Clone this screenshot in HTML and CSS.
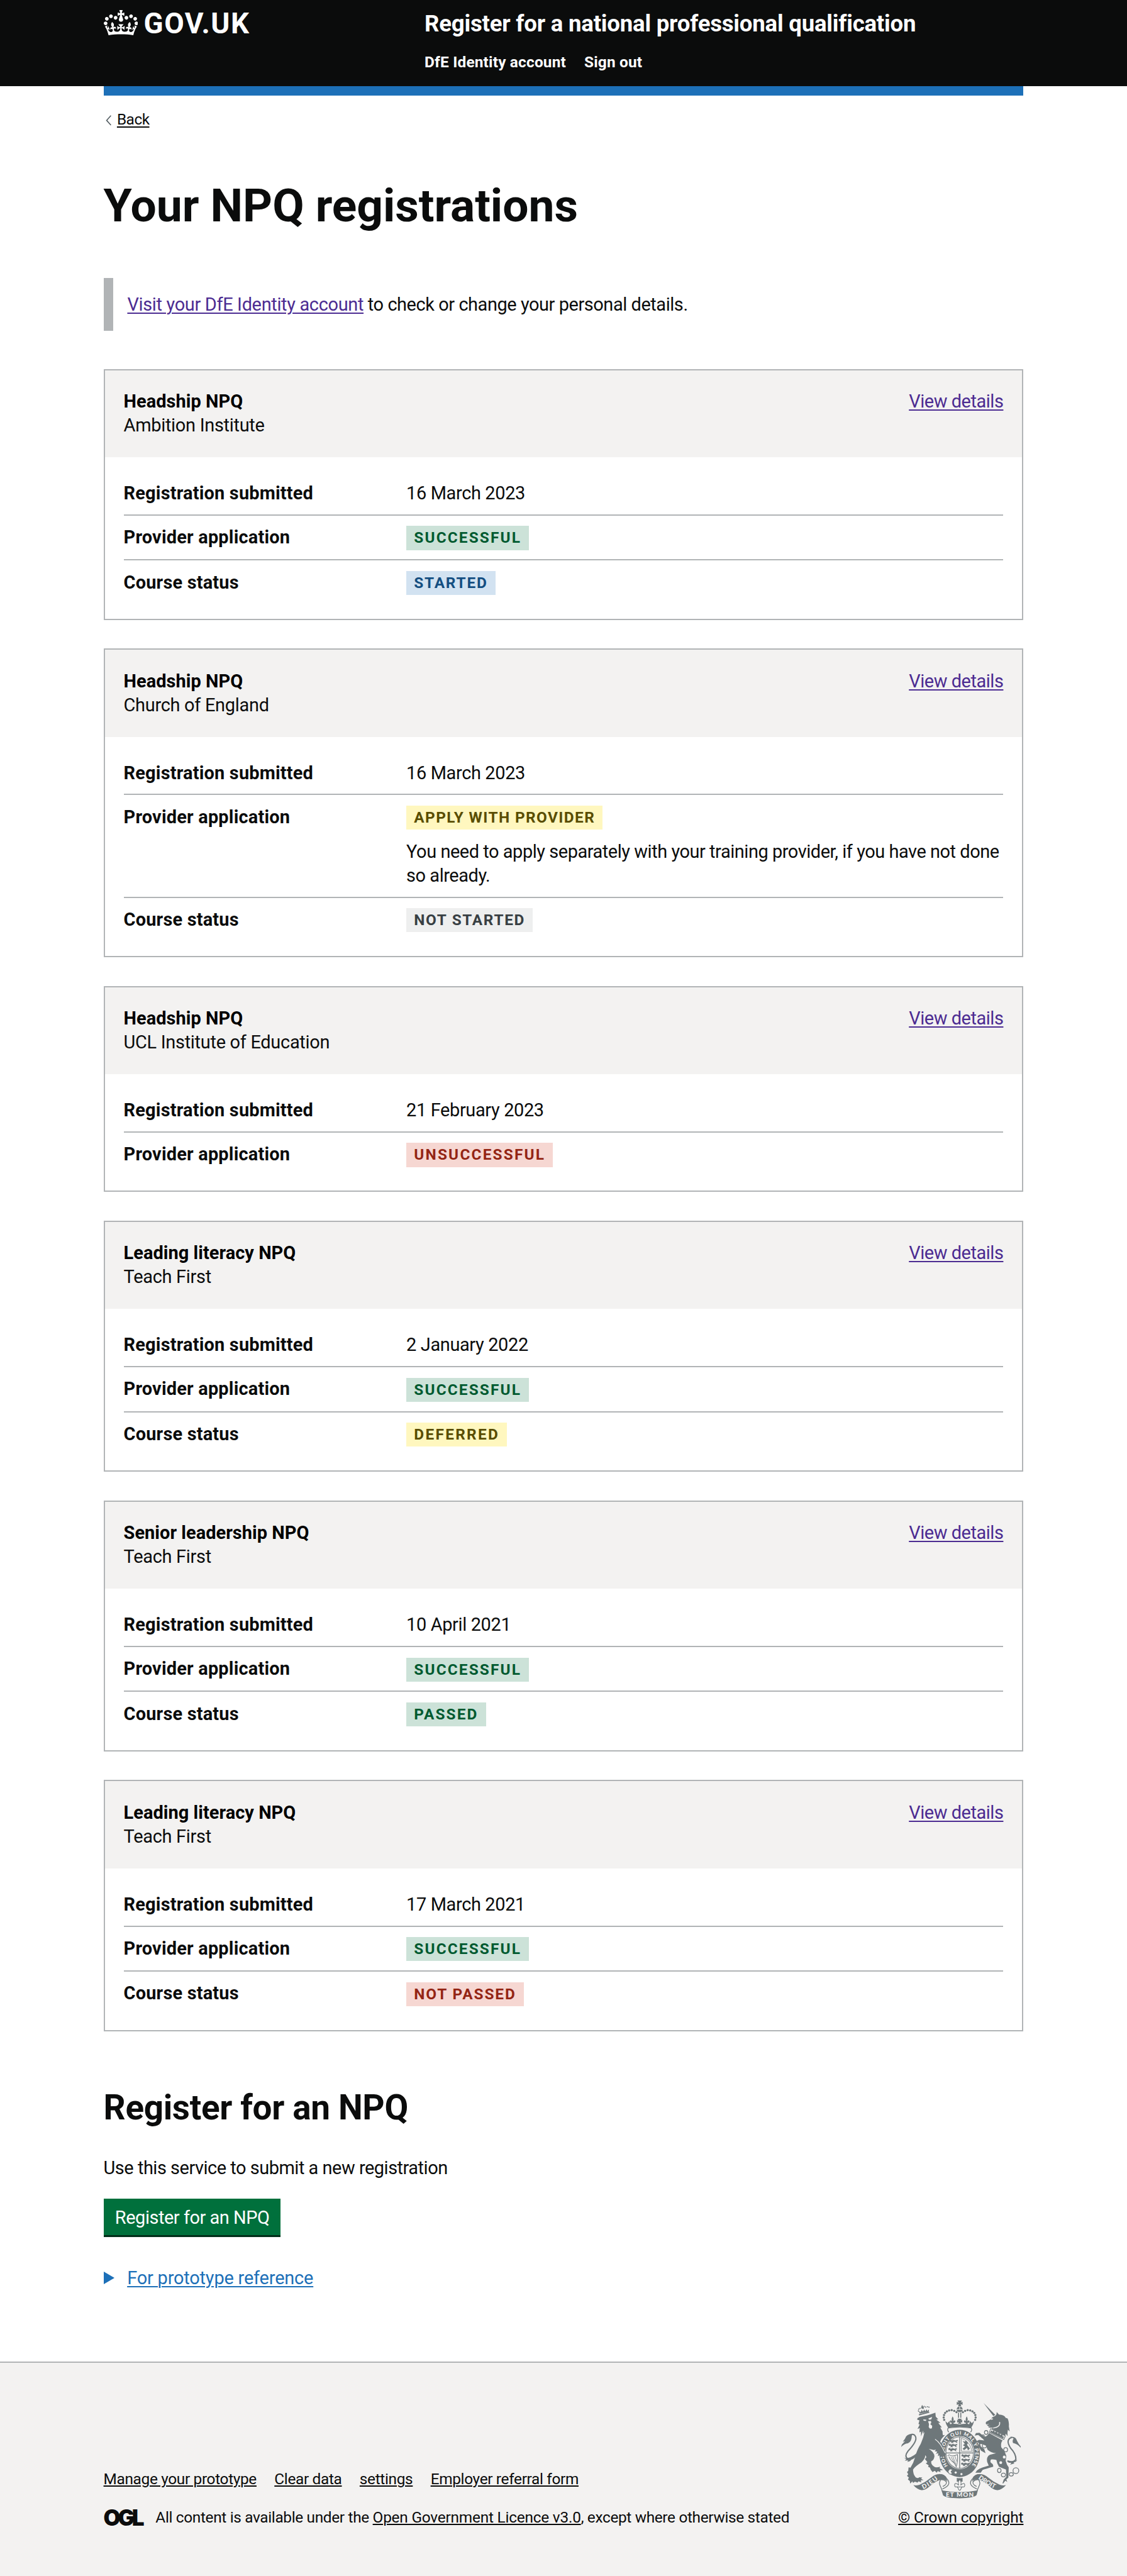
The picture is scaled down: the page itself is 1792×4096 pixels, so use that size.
FILE: index.html
```html
<!DOCTYPE html>
<html lang="en">
<head>
<meta charset="utf-8">
<title>Your NPQ registrations</title>
<link rel="stylesheet" href="styles.css">
</head>
<body>
<header class="header">
  <div class="container header__container">
    <a class="header__logo" href="#">
      <svg class="header__crown" viewBox="0 0 132 97" aria-hidden="true"><path fill="currentColor" fill-rule="evenodd" d="M25 30.2c3.5 1.5 7.7-.2 9.1-3.7 1.5-3.6-.2-7.8-3.9-9.2-3.6-1.4-7.6.3-9.1 3.9-1.4 3.5.3 7.5 3.9 9zM9 39.5c3.6 1.5 7.8-.2 9.2-3.7 1.5-3.6-.2-7.8-3.9-9.1-3.6-1.5-7.6.2-9.1 3.8-1.4 3.5.3 7.5 3.8 9zM4.4 57.2c3.5 1.5 7.7-.2 9.1-3.8 1.5-3.6-.2-7.7-3.9-9.1-3.5-1.5-7.6.3-9.1 3.8-1.4 3.5.3 7.6 3.9 9.1zm38.3-21.4c3.5 1.5 7.7-.2 9.1-3.8 1.5-3.6-.2-7.7-3.9-9.1-3.6-1.5-7.6.3-9.1 3.8-1.3 3.6.4 7.7 3.9 9.1zm64.4-5.6c-3.6 1.5-7.8-.2-9.1-3.7-1.5-3.6.2-7.8 3.8-9.2 3.6-1.4 7.7.3 9.2 3.9 1.3 3.5-.4 7.5-3.9 9zm15.9 9.3c-3.6 1.5-7.7-.2-9.1-3.7-1.5-3.6.2-7.8 3.7-9.1 3.6-1.5 7.7.2 9.2 3.8 1.5 3.5-.3 7.5-3.8 9zm4.7 17.7c-3.6 1.5-7.8-.2-9.2-3.8-1.5-3.6.2-7.7 3.9-9.1 3.6-1.5 7.7.3 9.2 3.8 1.3 3.5-.4 7.6-3.9 9.1zM89.3 35.8c-3.6 1.5-7.8-.2-9.2-3.8-1.4-3.6.2-7.7 3.9-9.1 3.6-1.5 7.7.3 9.2 3.8 1.4 3.6-.3 7.7-3.9 9.1zM69.7 17.7l8.9 4.7V9.3l-8.9 2.8c-.2-.3-.5-.6-.9-.9L72.4 0H59.6l3.5 11.2c-.3.3-.6.5-.9.9l-8.8-2.8v13.1l8.8-4.7c.3.3.6.7.9.9l-5 15.4v.1c-.2.8-.4 1.6-.4 2.4 0 4.1 3.1 7.5 7 8.1h.2c.3 0 .7.1 1 .1.4 0 .7 0 1-.1h.2c4-.6 7.1-4.1 7.1-8.1 0-.8-.1-1.7-.4-2.4V34l-5.1-15.4c.4-.2.7-.6 1-.9zM66 92.8c16.9 0 32.8 1.1 47.1 3.2 4-16.9 8.9-26.7 14-33.5l-9.6-3.4c1 4.9 1.1 7.2 0 10.2-1.5-1.4-3-4.3-4.2-8.7L108.6 76c2.8-2 5-3.2 7.5-3.3-4.4 9.4-10 11.9-13.6 11.2-4.3-.8-6.3-4.6-5.6-7.9 1-4.7 5.7-5.9 8-.5 4.3-8.7-3-11.4-7.6-8.8 7.1-7.2 7.9-13.5 2.1-21.1-8 6.1-8.1 12.3-4.5 20.8-4.7-5.4-12.1-2.5-9.5 6.2 3.4-5.2 7.9-2 7.2 3.1-.6 4.3-6.4 7.8-13.5 7.2-10.3-.9-10.9-8-11.2-13.8 2.5-.5 7.1 1.8 11 7.3L80.2 60c-4.1 4.4-8 5.3-12.3 5.4 1.4-4.4 8-11.6 8-11.6H55.5s6.4 7.2 7.9 11.6c-4.2-.1-8-1-12.3-5.4l1.4 16.4c3.9-5.5 8.5-7.7 10.9-7.3-.3 5.8-.9 12.8-11.1 13.8-7.2.6-12.9-2.9-13.5-7.2-.7-5 3.8-8.3 7.1-3.1 2.7-8.7-4.6-11.6-9.4-6.2 3.7-8.5 3.6-14.7-4.6-20.8-5.8 7.6-5 13.9 2.2 21.1-4.7-2.6-11.9.1-7.7 8.8 2.3-5.5 7.1-4.2 8.1.5.7 3.3-1.3 7.1-5.7 7.9-3.5.7-9-1.8-13.5-11.2 2.5.1 4.7 1.3 7.5 3.3l-4.7-15.4c-1.2 4.4-2.7 7.2-4.3 8.7-1.1-3-.9-5.3 0-10.2l-9.5 3.4c5 6.9 9.9 16.7 14 33.5 14.8-2.1 30.8-3.2 47.7-3.2z"/></svg>
      <span class="header__logotype">GOV.UK</span>
    </a>
    <div class="header__content">
      <a class="header__service" href="#">Register for a national professional qualification</a>
      <nav class="header__nav"><a href="#">DfE Identity account</a><a href="#">Sign out</a></nav>
    </div>
  </div>
</header>

<div class="container main">
  <div class="phase-bar"></div>
  <a class="back-link" href="#">
    <svg class="back-link__arrow" viewBox="0 0 12 22" aria-hidden="true"><path d="M11 1 2 11l9 10" fill="none" stroke="#505a5f" stroke-width="2"/></svg><span class="back-link__text">Back</span>
  </a>
  <main>
    <h1 class="heading-xl">Your NPQ registrations</h1>
    <p class="inset"><a class="link" href="#">Visit your DfE Identity account</a> to check or change your personal details.</p>

    <section class="card">
      <div class="card__header"><div><h2 class="card__title">Headship NPQ</h2><p class="card__provider">Ambition Institute</p></div><a class="link" href="#">View details</a></div>
      <dl class="card__list">
        <div class="row"><dt>Registration submitted</dt><dd>16 March 2023</dd></div>
        <div class="row"><dt>Provider application</dt><dd><strong class="tag tag--successful">SUCCESSFUL</strong></dd></div>
        <div class="row"><dt>Course status</dt><dd><strong class="tag tag--started">STARTED</strong></dd></div>
      </dl>
    </section>

    <section class="card">
      <div class="card__header"><div><h2 class="card__title">Headship NPQ</h2><p class="card__provider">Church of England</p></div><a class="link" href="#">View details</a></div>
      <dl class="card__list">
        <div class="row"><dt>Registration submitted</dt><dd>16 March 2023</dd></div>
        <div class="row"><dt>Provider application</dt><dd><strong class="tag tag--apply">APPLY WITH PROVIDER</strong><p class="note">You need to apply separately with your training provider, if you have not done so already.</p></dd></div>
        <div class="row"><dt>Course status</dt><dd><strong class="tag tag--not-started">NOT STARTED</strong></dd></div>
      </dl>
    </section>

    <section class="card">
      <div class="card__header"><div><h2 class="card__title">Headship NPQ</h2><p class="card__provider">UCL Institute of Education</p></div><a class="link" href="#">View details</a></div>
      <dl class="card__list">
        <div class="row"><dt>Registration submitted</dt><dd>21 February 2023</dd></div>
        <div class="row"><dt>Provider application</dt><dd><strong class="tag tag--unsuccessful">UNSUCCESSFUL</strong></dd></div>
      </dl>
    </section>

    <section class="card">
      <div class="card__header"><div><h2 class="card__title">Leading literacy NPQ</h2><p class="card__provider">Teach First</p></div><a class="link" href="#">View details</a></div>
      <dl class="card__list">
        <div class="row"><dt>Registration submitted</dt><dd>2 January 2022</dd></div>
        <div class="row"><dt>Provider application</dt><dd><strong class="tag tag--successful">SUCCESSFUL</strong></dd></div>
        <div class="row"><dt>Course status</dt><dd><strong class="tag tag--deferred">DEFERRED</strong></dd></div>
      </dl>
    </section>

    <section class="card">
      <div class="card__header"><div><h2 class="card__title">Senior leadership NPQ</h2><p class="card__provider">Teach First</p></div><a class="link" href="#">View details</a></div>
      <dl class="card__list">
        <div class="row"><dt>Registration submitted</dt><dd>10 April 2021</dd></div>
        <div class="row"><dt>Provider application</dt><dd><strong class="tag tag--successful">SUCCESSFUL</strong></dd></div>
        <div class="row"><dt>Course status</dt><dd><strong class="tag tag--passed">PASSED</strong></dd></div>
      </dl>
    </section>

    <section class="card">
      <div class="card__header"><div><h2 class="card__title">Leading literacy NPQ</h2><p class="card__provider">Teach First</p></div><a class="link" href="#">View details</a></div>
      <dl class="card__list">
        <div class="row"><dt>Registration submitted</dt><dd>17 March 2021</dd></div>
        <div class="row"><dt>Provider application</dt><dd><strong class="tag tag--successful">SUCCESSFUL</strong></dd></div>
        <div class="row"><dt>Course status</dt><dd><strong class="tag tag--not-passed">NOT PASSED</strong></dd></div>
      </dl>
    </section>

    <h2 class="heading-l">Register for an NPQ</h2>
    <p class="body">Use this service to submit a new registration</p>
    <a class="button" href="#">Register for an NPQ</a>
    <div class="details"><span class="details__arrow"></span><a class="details__text" href="#">For prototype reference</a></div>
  </main>
</div>

<footer class="footer">
  <div class="container footer__container">
    <div>
      <nav class="footer__links"><a href="#">Manage your prototype</a><a href="#">Clear data</a><a href="#">settings</a><a href="#">Employer referral form</a></nav>
      <div class="footer__licence"><span class="ogl">OGL</span><span>All content is available under the <a class="footer__ogl-link" href="#">Open Government Licence v3.0</a>, except where otherwise stated</span></div>
    </div>
    <div class="footer__crest">
      <svg class="arms" viewBox="18 18 750 612" aria-hidden="true">
        <defs>
          <path id="garter" d="M310 427A98 118 0 1 1 458 427"/>
          <path id="dieu" d="M156 573Q205 552 262 500"/>
          <path id="droit" d="M499 506Q560 552 622 578"/>
          <g id="fleur"><path d="M0-22Q-9-8-3 4-14-6-15 6-12 16-3 12L-8 22H8L3 12Q12 16 15 6 14-6 3 4 9-8 0-22Z"/></g>
          <g id="beast"><path d="M0 6 8 0 16 6 28 2 40 6 52 2 56 8 46 14 54 22 44 20 38 14 24 16 26 24 18 20 12 24 14 14 4 14Z"/></g>
          <g id="crown-side">
            <circle cx="287" cy="139" r="7"/><circle cx="284" cy="124" r="7"/><circle cx="286" cy="109" r="7"/><circle cx="293" cy="96" r="7"/><circle cx="304" cy="86" r="7"/><circle cx="318" cy="80" r="7"/><circle cx="334" cy="78" r="7"/><circle cx="350" cy="83" r="7"/><circle cx="364" cy="91" r="7"/>
          </g>
          <g id="ribbon">
            <path d="M94 548Q112 552 132 546 172 528 205 500 235 476 262 479 272 496 266 514 236 520 200 552 170 581 145 579 120 577 94 548Z"/>
            <path d="M256 480Q290 480 302 506 318 520 316 538 312 556 276 572M266 514Q286 510 300 526 306 544 278 556M266 514Q252 532 262 552 268 566 276 586" fill="none" stroke="#6e777a" stroke-width="5"/>
            <path d="M262 479Q292 480 302 508L308 526Q294 508 266 513Z"/>
          </g>
        </defs>
        <g fill="#6e777a">
          <!-- central crown -->
          <path d="M370 18H398L392 28 390 31 402 26V46L390 41 394 54H374L378 41 366 46V26L378 31Z"/>
          <path d="M365 72Q368 56 382 56V72ZM403 72Q400 56 386 56V72ZM364 76H404Q400 90 384 91 368 90 364 76Z"/>
          <path d="M374 94H380V126H374ZM388 94H394V126H388Z"/>
          <use href="#crown-side"/><use href="#crown-side" transform="matrix(-1 0 0 1 768 0)"/>
          <use href="#fleur" transform="translate(340 143) scale(1.15)"/><use href="#fleur" transform="translate(428 143) scale(1.15)"/>
          <path d="M370 132H398L391 142 400 139V157L390 152 394 164H374L378 152 368 157V139L377 142Z"/>
          <path d="M294 146 308 160 320 146 324 166Q352 160 384 168 416 160 444 166L448 146 460 160 474 146Q470 170 456 188 384 176 312 188 298 170 294 146Z"/>
          <path d="M312 190Q384 178 456 190 464 204 452 216M312 190Q304 204 316 216" fill="none" stroke="#6e777a" stroke-width="5"/>
          <!-- garter and shield -->
          <path fill-rule="evenodd" d="M384 201A127 148 0 1 1 383 201ZM384 240A91 104 0 1 0 385 240Z"/>
          <ellipse cx="384" cy="344" rx="86" ry="99" fill="none" stroke="#6e777a" stroke-width="4"/>
          <path d="M384 246V443M298 346H470" stroke="#6e777a" stroke-width="5"/>
          <path d="M394 254V336H462M394 254Q446 270 462 336" fill="none" stroke="#6e777a" stroke-width="3"/>
          <use href="#beast" x="318" y="262"/><use href="#beast" x="314" y="288"/><use href="#beast" x="312" y="314"/>
          <use href="#beast" x="394" y="354"/><use href="#beast" x="394" y="380"/><use href="#beast" x="392" y="406"/>
          <path d="M402 270 414 276 424 268 436 284 430 296 448 318 436 330 430 314 412 328 402 320 418 306 404 298 416 290Z"/>
          <path d="M308 364 318 358Q340 372 370 356 374 400 362 432 354 408 336 398 322 384 316 368" fill="none" stroke="#6e777a" stroke-width="4"/>
          <path d="M330 370 350 408M342 370 360 418M354 366 366 400" stroke="#6e777a" stroke-width="3"/>
        </g>
        <text class="arms__motto"><textPath href="#garter" textLength="500">HONI SOIT QUI MAL Y PENSE</textPath></text>
        <g fill="#f3f2f1"><circle cx="359" cy="469" r="7"/><circle cx="395" cy="479" r="7"/></g>
        <path d="M322 448Q304 458 318 476 328 482 338 476L330 462 340 452" fill="#f3f2f1" stroke="#6e777a" stroke-width="4"/>
        <g fill="#6e777a">
          <!-- lion -->
          <path d="M120 128 134 120Q180 114 232 94L234 118 250 136 238 137 264 158 250 158 272 186 262 186 277 212Q276 225 279 236L292 234 270 258 262 275Q285 305 292 345L298 352 290 374 282 362 276 380 268 366 258 376 262 358 248 366 250 348 236 352 244 338 228 336 236 325 222 328 190 320Q225 340 226 368 222 392 206 398 202 420 225 432 235 440 262 432L258 442 280 452 262 455 264 466 246 460 240 470 228 458 214 466Q200 452 198 438L186 432 190 424 172 412 182 404 166 384 176 372 168 360Q170 382 145 405 105 430 92 450 92 480 108 498 125 508 130 498L150 500 142 508 158 516 140 518 144 530 126 524 120 532 104 526 92 534 88 524 74 538 72 522 60 512 66 500 54 490 62 480 54 466 62 458 64 436 76 438Q95 410 104 375 115 330 140 290 158 250 164 215L156 226 156 205 142 242 142 212 132 218 134 190 120 196 134 168 126 166 132 142 118 138Z"/>
          <path d="M122 348Q90 395 58 382 36 366 60 335 120 272 108 245 100 226 80 231" fill="none" stroke="#6e777a" stroke-width="8"/>
          <path d="M88 226Q50 228 42 256L28 276 42 272 22 294 17 310Q36 288 60 286 84 274 84 240Z"/>
          <path d="M34 374Q60 392 118 346 104 376 84 384 76 400 56 402L62 393 40 394 50 386Z"/>
          <path d="M128 104 192 88 195 94 130 112ZM134 100 128 84 140 92 146 76 154 88 162 74 168 86 178 72 180 84 192 74 190 88Z"/>
          <path d="M126 84Q122 66 146 66 146 52 154 60 162 50 168 60 194 50 196 70" fill="none" stroke="#6e777a" stroke-width="7" stroke-linecap="round" stroke-dasharray="1 10"/>
          <path d="M150 46 156 60 162 58 158 70 150 70 144 54Z"/>
          <!-- unicorn -->
          <g transform="translate(378 0)">
            <path d="M155 33 229 108 217 115Z"/>
            <path d="M236 106 238 90 252 106Q285 108 294 126L306 130Q316 150 314 180L319 212 308 200Q304 215 306 240L294 226 291 242 206 194 214 186Q190 192 184 182L200 176 184 178 176 172 192 164 172 168Q166 156 174 150L204 134 208 124 228 114Z"/>
            <path d="M200 194 292 240 282 262 192 218Z" fill="#f3f2f1" stroke="#6e777a" stroke-width="4"/>
            <path d="M196 216 206 204 212 212 220 202 226 218 236 210 244 226 254 218 260 234 272 228 276 244 284 242 278 256Z"/>
            <path d="M190 222 275 268Q262 280 266 310 290 335 298 365L294 395Q300 420 313 436L311 500 298 512 304 528 292 520 278 538 274 536 282 512 298 495 296 450Q270 440 252 432 240 415 236 390 215 385 202 387 195 400 202 408 218 416 216 432 170 445 150 452L138 470 104 470 115 455 130 445Q170 430 188 426L178 402Q172 370 195 358L234 348Q200 345 180 325L172 302 150 292 134 290 138 305 160 322 168 348 140 332 124 304 126 286 112 272 128 264 160 268 150 256 122 234 100 238 108 222 130 220 158 242Q172 250 190 222Z"/>
            <path d="M306 396Q346 410 358 385 358 350 325 316 290 262 332 249" fill="none" stroke="#6e777a" stroke-width="8"/>
            <path d="M322 245Q358 240 366 272L376 290 392 310V318Q370 290 340 284 334 266 344 256Z"/>
            <path d="M302 394Q340 412 366 388 362 404 344 404L348 412 322 420 330 408Q306 410 302 394Z"/>
          </g>
        </g>
        <g fill="#f3f2f1">
          <path d="M156 136 176 138 172 146 158 144ZM188 130 212 120 206 136 192 138Z"/>
          <path d="M186 148 204 146 206 158 200 166 212 176 210 192 198 194 190 184 192 166Z"/>
          <circle cx="663" cy="372" r="9"/><circle cx="641" cy="407" r="9"/>
        </g>
        <path d="M230 260Q264 282 292 346" fill="none" stroke="#f3f2f1" stroke-width="4"/>
        <path d="M634 152Q640 184 594 190M580 136 592 132" fill="none" stroke="#f3f2f1" stroke-width="6"/>
        <g fill="none" stroke="#6e777a" stroke-width="5">
          <ellipse cx="550" cy="218" rx="11" ry="12"/><ellipse cx="530" cy="243" rx="8" ry="10"/><ellipse cx="539" cy="302" rx="13" ry="13"/><ellipse cx="672" cy="326" rx="12" ry="13"/><ellipse cx="632" cy="456" rx="11" ry="13"/><ellipse cx="658" cy="484" rx="13" ry="12"/><ellipse cx="707" cy="480" rx="13" ry="11"/><circle cx="736" cy="457" r="18"/>
        </g>
        <g fill="#6e777a">
          <use href="#ribbon"/><use href="#ribbon" transform="matrix(-1 0 0 1 768 0)"/>
          <path d="M270 580Q384 604 498 580L490 610Q470 630 384 630 298 630 280 612Z"/>
          <path d="M366 502Q384 506 402 502V526H366Z"/>
          <path d="M384 512Q370 528 378 548 354 526 352 548 354 564 368 558L374 566Q378 580 384 580 390 580 394 566L400 558Q414 564 416 548 414 526 390 548 398 528 384 512Z" fill="#f3f2f1" stroke="#6e777a" stroke-width="4"/>
          <path d="M366 559H402" stroke="#6e777a" stroke-width="4"/>
        </g>
        <text class="arms__scroll"><textPath href="#dieu" textLength="112">DIEU</textPath></text>
        <text class="arms__scroll"><textPath href="#droit" textLength="120">DROIT</textPath></text>
        <text class="arms__scroll" x="298" y="622" textLength="173">ET MON</text>
      </svg>
      <a class="footer__copyright" href="#">© Crown copyright</a>
    </div>
  </div>
</footer>
</body>
</html>
```
FILE: styles.css
```css
/* 1rem is ten design pixels; everything below is sized from it */
html { font-size: 15.238px; }
* { box-sizing: border-box; }
body { margin: 0; background: #fff; color: #0b0c0c; font-family: Roboto, "Noto Sans", sans-serif; font-size: 1.9rem; line-height: 2.5rem; letter-spacing: -0.0125em; }
h1, h2, p, dl, dd { margin: 0; }
a { color: inherit; text-decoration-thickness: .1rem; text-underline-offset: .1em; }
.container { width: 96rem; margin: 0 auto; }

.header { height: 9rem; background: #0b0c0c; color: #fff; }
.header a { text-decoration: none; }
.header__container { display: flex; padding-top: 1rem; }
.header__logo { display: flex; width: 33.5rem; }
.header__crown { width: 3.6rem; height: 2.65rem; margin: .05rem .6rem 0 0; }
.header__logotype { font-size: 3rem; line-height: 3rem; font-weight: 700; letter-spacing: .034em; }
.header__content { display: flex; flex-direction: column; gap: 1.5rem; font-weight: 700; }
.header__service { font-size: 2.4rem; line-height: 3rem; letter-spacing: -0.0055em; }
.header__nav { display: flex; gap: 1.9rem; font-size: 1.6rem; line-height: 2rem; letter-spacing: .008em; }

.phase-bar { height: 1rem; background: #1d70b8; }
.back-link { display: flex; align-items: center; width: max-content; margin-top: 1.5rem; font-size: 1.6rem; line-height: 2rem; letter-spacing: -0.02em; text-decoration: none; }
.back-link__arrow { width: .6rem; height: 1.1rem; margin: .1rem .6rem 0 .2rem; }
.back-link__text { text-decoration: underline .1rem; text-underline-offset: .12em; }

.heading-xl { margin-top: 5.45rem; font-size: 4.8rem; line-height: 5rem; letter-spacing: -0.0005em; }
.inset { margin: 5.05rem 0 4rem; padding: 1.53rem 1.5rem 1.47rem; border-left: 1rem solid #b1b4b6; letter-spacing: -0.015em; }
.inset .link { letter-spacing: -0.0115em; }
.link { color: #4c2c92; }
.card .link { letter-spacing: -0.0155em; }

.card { margin-bottom: 3rem; padding: .13rem; box-shadow: inset 0 0 0 .13rem #b1b4b6; }
.card__header { display: flex; justify-content: space-between; padding: 2rem 1.97rem 2.07rem; background: #f3f2f1; }
.card__title { color: #000; font-size: 1.9rem; line-height: 2.5rem; letter-spacing: .0015em; }
.card__provider { letter-spacing: -0.01em; }
.card__list { padding: .5rem 1.97rem 1.57rem; }
.row { display: flex; padding: 1rem 0 1.1rem; box-shadow: inset 0 -.13rem #b1b4b6; }
.row:first-child { padding-top: 2rem; }
.row:last-child { padding-bottom: .9rem; box-shadow: none; }
.row dt { width: 29.5rem; font-weight: 700; letter-spacing: .0065em; }
.row dd { flex: 1; }

.tag { display: block; width: max-content; margin-top: .1rem; padding: 0 .8rem; font-size: 1.6rem; line-height: 2.5rem; letter-spacing: .073em; }
.tag--successful, .tag--passed { background: #cce2d8; color: #005a30; }
.tag--successful { letter-spacing: .088em; }
.tag--passed { letter-spacing: .085em; }
.tag--started { background: #d2e2f1; color: #144e81; }
.tag--apply, .tag--deferred { background: #fff7bf; color: #594d00; }
.tag--apply { letter-spacing: .057em; }
.tag--deferred { letter-spacing: .095em; }
.tag--not-started { background: #eeefef; color: #383f43; letter-spacing: .068em; }
.tag--unsuccessful, .tag--not-passed { background: #f6d7d2; color: #942514; }
.tag--unsuccessful { letter-spacing: .09em; }
.tag--not-passed { letter-spacing: .078em; }
.note { margin-top: 1rem; letter-spacing: -0.0155em; }

.heading-l { margin-top: 6rem; font-size: 3.6rem; line-height: 4rem; letter-spacing: -0.006em; }
.body { margin-top: 3rem; letter-spacing: -0.0165em; }
.button { display: block; width: 18.5rem; margin-top: 2rem; padding: .7rem 1.2rem .6rem; background: #00703c; box-shadow: 0 .2rem 0 #002d18; color: #fff; text-decoration: none; letter-spacing: -0.016em; white-space: nowrap; }
.details { display: flex; align-items: center; gap: 1.35rem; margin-top: 3.2rem; color: #1d70b8; letter-spacing: -0.0065em; }
.details__arrow { border: solid transparent; border-width: .7rem 0 .7rem 1.15rem; border-left-color: currentColor; }

.footer { height: 22.35rem; margin-top: 7.5rem; padding-top: 4.08rem; background: #f3f2f1; box-shadow: inset 0 .13rem #b1b4b6; font-size: 1.6rem; line-height: 2rem; letter-spacing: -0.0135em; }
.footer__container { display: flex; justify-content: space-between; align-items: flex-end; }
.footer__links { display: flex; gap: 1.86rem; margin-bottom: 2rem; }
.footer__licence { display: flex; }
.footer__ogl-link { letter-spacing: -0.0085em; }
.ogl { width: 5.43rem; font-family: Inter, sans-serif; font-size: 2.3rem; font-weight: 900; letter-spacing: -0.12em; }
.footer__crest { display: flex; flex-direction: column; align-items: center; }
.arms { width: 12.5rem; height: 10.2rem; margin-bottom: .98rem; }
.arms__motto { fill: #f3f2f1; font: 900 31px Lato, sans-serif; letter-spacing: 0; }
.arms__scroll { fill: #f3f2f1; font: 900 39px Lato, sans-serif; letter-spacing: 0; }
.footer__copyright { letter-spacing: -0.006em; }
```
